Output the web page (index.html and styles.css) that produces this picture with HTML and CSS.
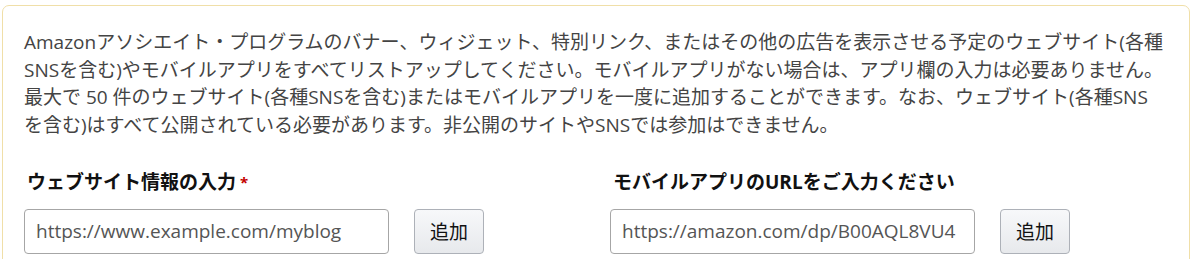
FILE: index.html
```html
<!DOCTYPE html>
<html lang="ja">
<head>
    <meta charset="UTF-8">
    <meta name="viewport" content="width=device-width, initial-scale=1.0">
    <title>ウェブサイト情報</title>
    <link rel="stylesheet" href="styles.css">
</head>
<body>

    <div class="info-box">
        <p class="intro">Amazonアソシエイト・プログラムのバナー、ウィジェット、特別リンク、またはその他の広告を表示させる予定のウェブサイト(各種SNSを含む)やモバイルアプリをすべてリストアップしてください。モバイルアプリがない場合は、アプリ欄の入力は必要ありません。最大で 50 件のウェブサイト(各種SNSを含む)またはモバイルアプリを一度に追加することができます。なお、ウェブサイト(各種SNSを含む)はすべて公開されている必要があります。非公開のサイトやSNSでは参加はできません。</p>

        <div class="field-grid">
            <div class="field">
                <label class="field-label" for="siteUrl">ウェブサイト情報の入力<span class="required">*</span></label>
                <div class="field-row">
                    <input type="text" id="siteUrl" placeholder="https://www.example.com/myblog">
                    <button class="add-button">追加</button>
                </div>
            </div>
            <div class="field">
                <label class="field-label" for="appUrl">モバイルアプリのURLをご入力ください</label>
                <div class="field-row">
                    <input type="text" id="appUrl" placeholder="https://amazon.com/dp/B00AQL8VU4">
                    <button class="add-button">追加</button>
                </div>
            </div>
        </div>
    </div>

</body>
</html>
```

FILE: styles.css
```css
body {
    margin: 0;
    background-color: #fff;
    color: #444;
    font-family: "Open Sans", "Noto Sans CJK JP", sans-serif;
    font-size: 19px;
    line-height: 27.5px;
}

.info-box {
    margin: 5px 10px 0 2px;
    padding: 23px 21px 30px 21px;
    border: 1px solid #f0dfa8;
    border-radius: 7px;
}

.intro {
    margin: 0 4px 30px 0;
}

.field-grid {
    display: grid;
    grid-template-columns: 1fr 1fr;
    column-gap: 28px;
}

.field-label {
    display: block;
    margin: 0 0 12px 3px;
    color: #111;
    font-weight: bold;
}

.required {
    color: #c40000;
    font-size: 15px;
    margin-left: 4px;
    vertical-align: top;
}

.field-row {
    display: flex;
    gap: 25px;
}

.field-row input {
    box-sizing: border-box;
    width: 365px;
    height: 45px;
    padding: 0 11px;
    border: 1px solid #a6a6a6;
    border-radius: 4px;
    font-family: inherit;
    font-size: 19px;
    color: #333;
}

.field-row input::placeholder {
    color: #555;
    opacity: 1;
}

.add-button {
    box-sizing: border-box;
    width: 70px;
    height: 45px;
    border: 1px solid #adb1b8;
    border-radius: 4px;
    background: linear-gradient(#f7f8fa, #e7e9ec);
    font-family: inherit;
    font-size: 19px;
    color: #111;
    cursor: pointer;
}
```
